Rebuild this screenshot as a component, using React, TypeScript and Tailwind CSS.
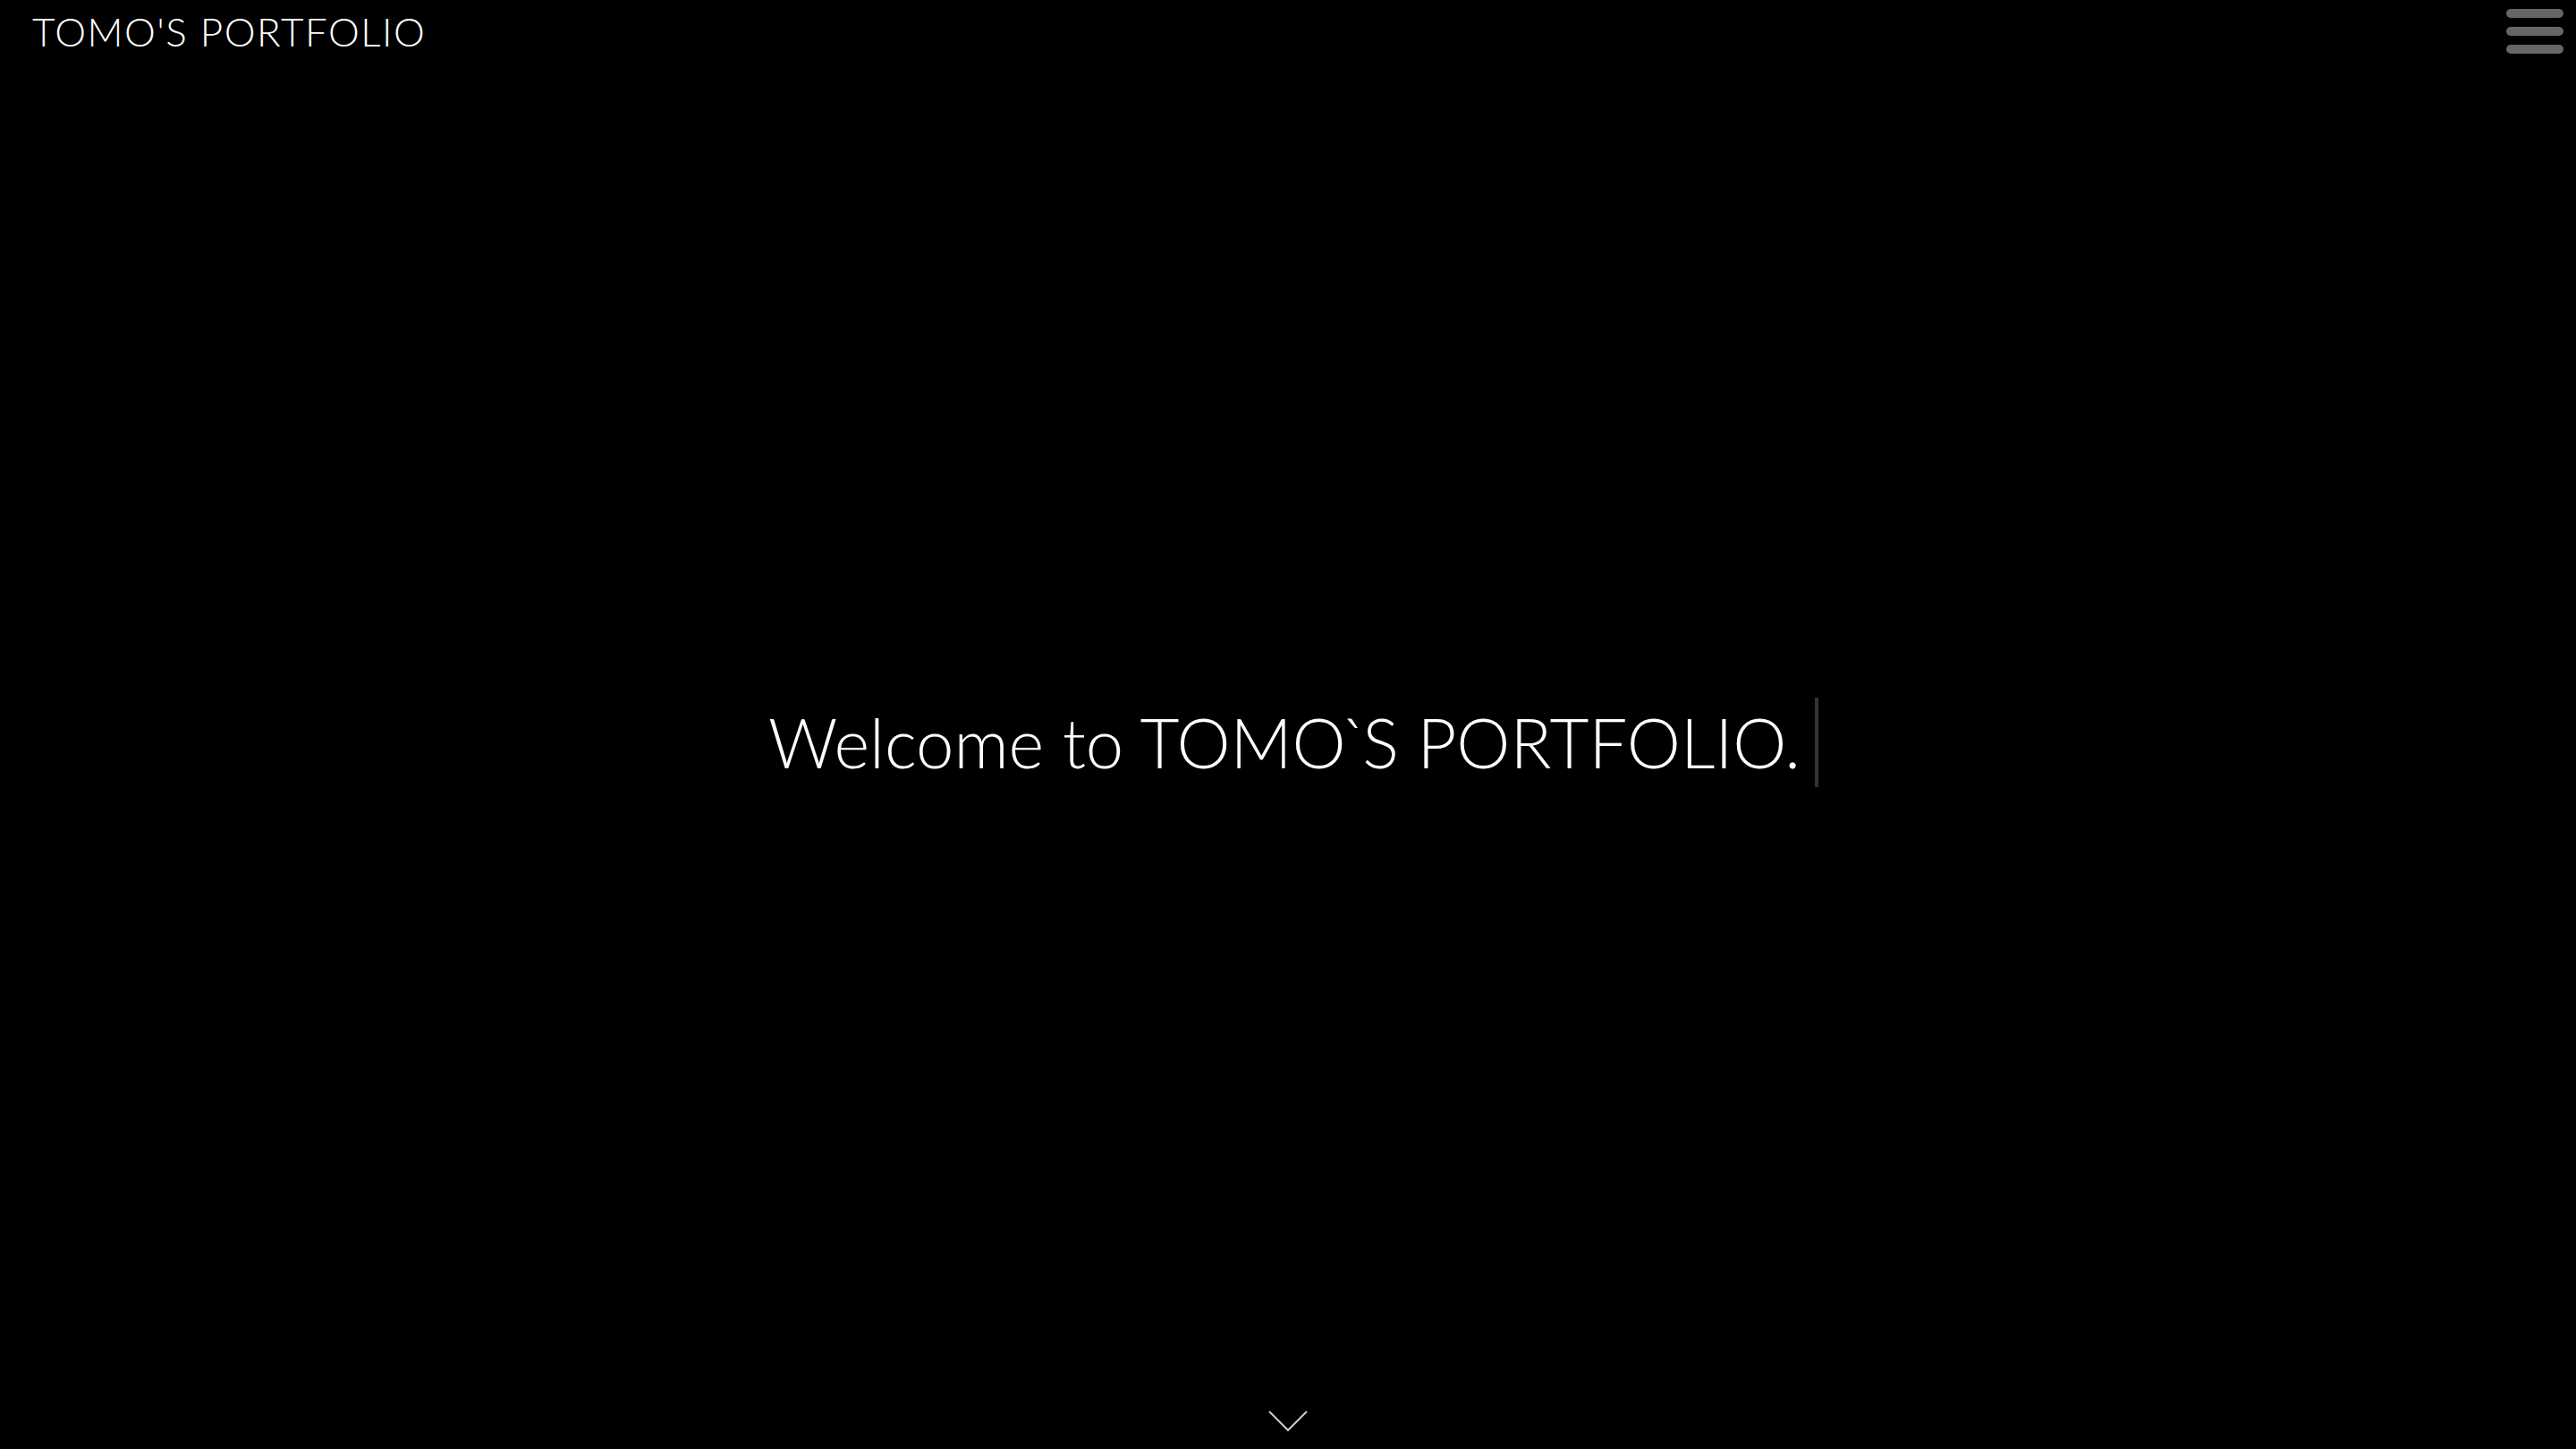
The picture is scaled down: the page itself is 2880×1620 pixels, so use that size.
import React from "react";

export default function App() {
  return (
    <div className="w-full h-[1620px] bg-black flex flex-col overflow-hidden" style={{ fontFamily: "Lato, 'Open Sans', sans-serif" }}>
      <header className="flex justify-between items-start h-[70px]">
        <div className="pl-[36px] pt-[7px] text-white text-[44px] font-light leading-[56px] tracking-[1.5px]">TOMO'S PORTFOLIO</div>
        <button className="mr-[14px] mt-[10px] flex flex-col gap-[10px]">
          <span className="block w-[64px] h-[10px] rounded-full bg-[#666666]" />
          <span className="block w-[64px] h-[10px] rounded-full bg-[#666666]" />
          <span className="block w-[64px] h-[10px] rounded-full bg-[#666666]" />
        </button>
      </header>
      <main className="flex-1 flex items-center justify-center pt-[14px] pl-[12px]">
        <div className="flex items-center">
          <span className="text-white text-[76px] font-light leading-[100px]">
            Welcome to TOM<span className="tracking-[-6px]">O`</span>S PORTFOLIO.
          </span>
          <span className="ml-[16px] w-[4px] h-[100px] bg-[#333333]" />
        </div>
      </main>
      <footer className="flex justify-center pb-[18px]">
        <svg width="46" height="26" viewBox="0 0 46 26" fill="none">
          <path d="M2 2 L23 23 L44 2" stroke="#cccccc" strokeWidth="2" />
        </svg>
      </footer>
    </div>
  );
}
